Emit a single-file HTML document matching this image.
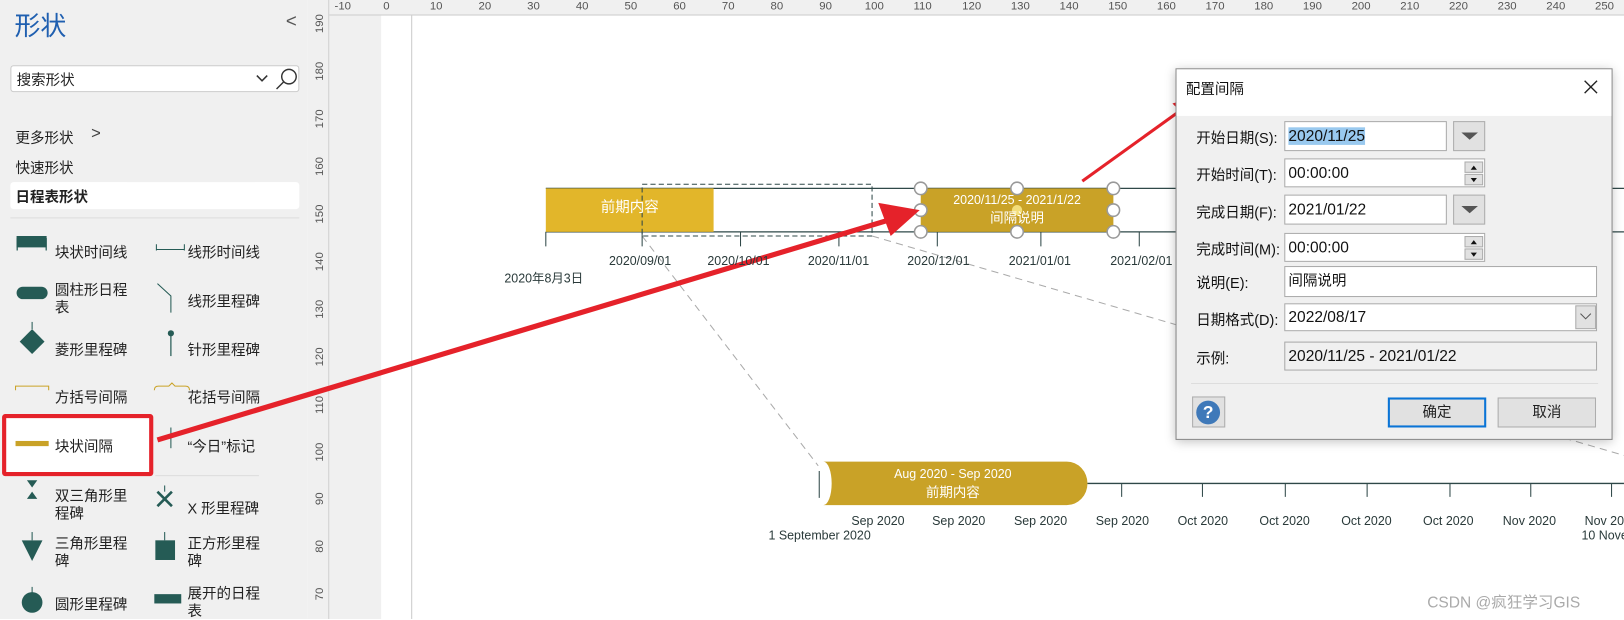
<!DOCTYPE html>
<html><head><meta charset="utf-8"><style>
*{margin:0;padding:0;box-sizing:border-box}
html,body{width:1624px;height:619px;overflow:hidden;background:#fff}
#w{position:absolute;left:0;top:0;width:1568px;height:598px;transform:scale(1.0357,1.0351);transform-origin:0 0;font-family:"Liberation Sans","Noto Sans CJK SC",sans-serif;color:#222}
.a{position:absolute;white-space:nowrap}
.side{left:0;top:0;width:297px;height:598px;background:#f0f0f0}
.st{font-size:14px;color:#222}
.rl{font-size:11px;color:#555}
.tl{font-size:12px;color:#2a3a3a}
.lbl{font-size:14px;color:#111}
.inp{background:#fff;border:1px solid #aaa;font-size:15px;padding:0 3px;color:#111;display:flex;align-items:center}
.btn{background:#e1e1e1;border:1px solid #adadad;font-size:14px;text-align:center}
</style></head><body><div id="w">
<!-- sidebar -->
<div class="a side"></div>
<div class="a" style="left:14px;top:6px;font-size:25px;color:#1f5fb0">形状</div>
<div class="a" style="left:276px;top:10px;font-size:18px;color:#555">&lt;</div>
<div class="a" style="left:10px;top:63px;width:279px;height:26px;background:#fff;border:1px solid #ccc;border-radius:3px"></div>
<div class="a st" style="left:16px;top:67px">搜索形状</div>
<svg class="a" style="left:246px;top:64px" width="44" height="24"><path d="M2 9l5 5 5-5" stroke="#333" fill="none" stroke-width="1.5"/><circle cx="33" cy="10" r="7" stroke="#333" fill="none" stroke-width="1.4"/><path d="M28 15l-7 7" stroke="#333" stroke-width="1.4"/></svg>
<div class="a st" style="left:15px;top:123px">更多形状</div>
<div class="a" style="left:88px;top:121px;font-size:16px;color:#444">&gt;</div>
<div class="a st" style="left:15px;top:152px">快速形状</div>
<div class="a" style="left:10px;top:176px;width:279px;height:26px;background:#fff;border-radius:3px"></div>
<div class="a st" style="left:15px;top:180px;font-weight:bold">日程表形状</div>
<div class="a" style="left:10px;top:210px;width:279px;height:1px;background:#ddd"></div>
<div class="a" style="left:2px;top:400px;width:146px;height:60px;border:4px solid #e5222a;border-radius:3px;background:#fff"></div>
<div class="a" style="left:150px;top:459px;width:100px;height:1px;background:#ddd"></div>
<svg class="a" style="left:0;top:225px" width="297" height="373">
<g fill="#255b55" stroke="#255b55">
<rect x="16" y="3" width="29" height="11" stroke="none"/><rect x="16" y="5" width="1.2" height="12" stroke="none"/><rect x="44" y="5" width="1.2" height="12" stroke="none"/>
<rect x="16" y="52" width="30" height="12" rx="6" stroke="none"/>
<path d="M31 93l12 12-12 12-12-12z" stroke="none"/><path d="M31 86v7" stroke-width="1"/>
<path d="M151 16h27M151 11v6M178 11v6" stroke-width="1" fill="none"/>
<path d="M152 49l13 12v16" fill="none" stroke-width="1"/>
<circle cx="165" cy="97" r="3" stroke="none"/><path d="M165 97v22" stroke-width="1.2"/>
<path d="M165 188v20" stroke-width="1"/>
<path d="M31 246l-5-7h10z M31 250l-5 7h10z" stroke="none"/>
<path d="M152 250l14 14M166 250l-14 14" stroke-width="2.5" fill="none"/><path d="M159 244v6" stroke-width="1"/>
<path d="M21 297h20l-10 20z" stroke="none"/><path d="M31 289v8" stroke-width="1"/>
<rect x="150" y="297" width="19" height="19" stroke="none"/><path d="M159 289v8" stroke-width="1"/>
<circle cx="31" cy="357" r="10" stroke="none"/><path d="M31 342v6" stroke-width="1"/>
<rect x="149" y="349" width="26" height="9" stroke="none"/>
</g>
<path d="M15 152v-4h32v4M149 152q0-4 4-4h10l3-3 3 3h10q4 0 4 4" stroke="#c9a227" fill="none" stroke-width="1"/>
<rect x="15" y="201" width="32" height="5" fill="#c9a227"/>
</svg>
<div class="a st" style="left:53px;top:234px">块状时间线</div>
<div class="a st" style="left:181px;top:234px">线形时间线</div>
<div class="a st" style="left:53px;top:272px;line-height:17px">圆柱形日程<br>表</div>
<div class="a st" style="left:181px;top:281px">线形里程碑</div>
<div class="a st" style="left:53px;top:328px">菱形里程碑</div>
<div class="a st" style="left:181px;top:328px">针形里程碑</div>
<div class="a st" style="left:53px;top:374px">方括号间隔</div>
<div class="a st" style="left:181px;top:374px">花括号间隔</div>
<div class="a st" style="left:53px;top:421px">块状间隔</div>
<div class="a st" style="left:181px;top:421px">“今日”标记</div>
<div class="a st" style="left:53px;top:471px;line-height:17px">双三角形里<br>程碑</div>
<div class="a st" style="left:181px;top:481px">X 形里程碑</div>
<div class="a st" style="left:53px;top:517px;line-height:17px">三角形里程<br>碑</div>
<div class="a st" style="left:181px;top:517px;line-height:17px">正方形里程<br>碑</div>
<div class="a st" style="left:53px;top:574px">圆形里程碑</div>
<div class="a st" style="left:181px;top:565px;line-height:17px">展开的日程<br>表</div>
<!-- rulers -->
<div class="a" style="left:297px;top:0;width:21px;height:598px;background:#f0f0f0;border-right:1px solid #ccc"></div>
<div class="a" style="left:318px;top:0;width:1250px;height:15px;background:#f0f0f0;border-bottom:1px solid #ccc"></div>
<div class="a" style="left:318px;top:15px;width:50px;height:583px;background:#f0f0f0"></div>
<div class="a" style="left:397px;top:15px;width:1px;height:583px;background:#ccc"></div>
<div class="a rl" style="left:323px;top:0">-10</div><div class="a rl" style="left:370px;top:0">0</div><div class="a rl" style="left:415px;top:0">10</div><div class="a rl" style="left:462px;top:0">20</div><div class="a rl" style="left:509px;top:0">30</div><div class="a rl" style="left:556px;top:0">40</div><div class="a rl" style="left:603px;top:0">50</div><div class="a rl" style="left:650px;top:0">60</div><div class="a rl" style="left:697px;top:0">70</div><div class="a rl" style="left:744px;top:0">80</div><div class="a rl" style="left:791px;top:0">90</div><div class="a rl" style="left:835px;top:0">100</div><div class="a rl" style="left:882px;top:0">110</div><div class="a rl" style="left:929px;top:0">120</div><div class="a rl" style="left:976px;top:0">130</div><div class="a rl" style="left:1023px;top:0">140</div><div class="a rl" style="left:1070px;top:0">150</div><div class="a rl" style="left:1117px;top:0">160</div><div class="a rl" style="left:1164px;top:0">170</div><div class="a rl" style="left:1211px;top:0">180</div><div class="a rl" style="left:1258px;top:0">190</div><div class="a rl" style="left:1305px;top:0">200</div><div class="a rl" style="left:1352px;top:0">210</div><div class="a rl" style="left:1399px;top:0">220</div><div class="a rl" style="left:1446px;top:0">230</div><div class="a rl" style="left:1493px;top:0">240</div><div class="a rl" style="left:1540px;top:0">250</div>
<svg class="a" style="left:297px;top:0" width="21" height="598"><g font-family="Liberation Sans" font-size="11" fill="#555">
<text transform="translate(15,32) rotate(-90)">190</text><text transform="translate(15,78) rotate(-90)">180</text><text transform="translate(15,124) rotate(-90)">170</text><text transform="translate(15,170) rotate(-90)">160</text><text transform="translate(15,216) rotate(-90)">150</text><text transform="translate(15,262) rotate(-90)">140</text><text transform="translate(15,308) rotate(-90)">130</text><text transform="translate(15,354) rotate(-90)">120</text><text transform="translate(15,400) rotate(-90)">110</text><text transform="translate(15,446) rotate(-90)">100</text><text transform="translate(15,488) rotate(-90)">90</text><text transform="translate(15,534) rotate(-90)">80</text><text transform="translate(15,580) rotate(-90)">70</text></g></svg>
<!-- canvas drawings -->
<svg class="a" style="left:0;top:0" width="1568" height="598">
<path d="M620 228L790 450M842 228L1568 440" stroke="#aaa" stroke-dasharray="7 5" fill="none"/>
<path d="M527 182H1568M527 224H1568" stroke="#2f4848" stroke-width="1.3"/>
<path d="M527 224v14M620 224v14M715 224v14M810 224v14M905 224v14M1005 224v14M1100 224v14" stroke="#2f4848"/>
<rect x="527" y="182" width="162" height="42" fill="#e2b62a"/>
<rect x="620" y="178" width="222" height="50" fill="none" stroke="#2f4848" stroke-dasharray="5 3"/>
<rect x="889" y="182" width="186" height="42" fill="#c9a227"/>
<g fill="#fff" stroke="#999" stroke-width="1.5"><circle cx="889" cy="182" r="6"/><circle cx="889" cy="203" r="6"/><circle cx="889" cy="224" r="6"/><circle cx="982" cy="182" r="6"/><circle cx="982" cy="224" r="6"/><circle cx="1075" cy="182" r="6"/><circle cx="1075" cy="203" r="6"/><circle cx="1075" cy="224" r="6"/></g>
<circle cx="982" cy="203" r="5" fill="#f3de7a"/>
<path d="M1050 467H1568" stroke="#2f4848" stroke-width="1.3"/>
<path d="M1083 467v13M1161 467v13M1241 467v13M1320 467v13M1400 467v13M1478 467v13M1556 467v13M791 455v26" stroke="#2f4848"/>
<path d="M795 446H1030a20 21 0 0 1 0 42H795a8 21 0 0 0 0-42z" fill="#c9a227"/>
<path d="M152 425L860 212" stroke="#e5222a" stroke-width="5"/><path d="M888 203L848 196 860 228z" fill="#e5222a"/>
<path d="M1045 175L1145 103" stroke="#e5222a" stroke-width="3"/><path d="M1162 91L1132 100 1146 114z" fill="#e5222a"/>
</svg>
<div class="a" style="left:527px;top:190px;width:162px;text-align:center;font-size:14px;color:#fff">前期内容</div>
<div class="a" style="left:889px;top:185px;width:186px;text-align:center;font-size:12px;color:#fff;line-height:17px">2020/11/25 - 2021/1/22<br><span style="font-size:13px">间隔说明</span></div>
<div class="a" style="left:795px;top:450px;width:250px;text-align:center;font-size:12px;color:#fff;line-height:17px">Aug 2020 - Sep 2020<br><span style="font-size:13px">前期内容</span></div>
<div class="a tl" style="left:588px;top:245px">2020/09/01</div><div class="a tl" style="left:683px;top:245px">2020/10/01</div><div class="a tl" style="left:780px;top:245px">2020/11/01</div><div class="a tl" style="left:876px;top:245px">2020/12/01</div><div class="a tl" style="left:974px;top:245px">2021/01/01</div><div class="a tl" style="left:1072px;top:245px">2021/02/01</div>
<div class="a tl" style="left:487px;top:260px">2020年8月3日</div>
<div class="a tl" style="left:822px;top:496px">Sep 2020</div><div class="a tl" style="left:900px;top:496px">Sep 2020</div><div class="a tl" style="left:979px;top:496px">Sep 2020</div><div class="a tl" style="left:1058px;top:496px">Sep 2020</div><div class="a tl" style="left:1137px;top:496px">Oct 2020</div><div class="a tl" style="left:1216px;top:496px">Oct 2020</div><div class="a tl" style="left:1295px;top:496px">Oct 2020</div><div class="a tl" style="left:1374px;top:496px">Oct 2020</div><div class="a tl" style="left:1451px;top:496px">Nov 2020</div><div class="a tl" style="left:1530px;top:496px">Nov 20</div>
<div class="a tl" style="left:742px;top:510px">1 September 2020</div><div class="a tl" style="left:1527px;top:510px">10 Nove</div>
<div class="a" style="left:1378px;top:571px;font-size:15px;color:#aaa">CSDN @疯狂学习GIS</div>
<!-- dialog -->
<div class="a" style="left:1135px;top:66px;width:422px;height:359px;background:#f0f0f0;border:1px solid #888;box-shadow:0 2px 10px rgba(0,0,0,.25)"></div>
<div class="a" style="left:1136px;top:67px;width:420px;height:45px;background:#fff"></div>
<div class="a" style="left:1145px;top:76px;font-size:14px;color:#111">配置间隔</div>
<svg class="a" style="left:1529px;top:77px" width="14" height="14"><path d="M1 1l12 12M13 1L1 13" stroke="#222" stroke-width="1.3"/></svg>
<div class="a lbl" style="left:1155px;top:123px">开始日期(S):</div>
<div class="a lbl" style="left:1155px;top:159px">开始时间(T):</div>
<div class="a lbl" style="left:1155px;top:195px">完成日期(F):</div>
<div class="a lbl" style="left:1155px;top:231px">完成时间(M):</div>
<div class="a lbl" style="left:1155px;top:263px">说明(E):</div>
<div class="a lbl" style="left:1155px;top:299px">日期格式(D):</div>
<div class="a lbl" style="left:1155px;top:336px">示例:</div>
<div class="a inp" style="left:1240px;top:117px;width:157px;height:29px"><span style="background:#99c9ef">2020/11/25</span></div>
<div class="a inp" style="left:1240px;top:153px;width:194px;height:28px">00:00:00</div>
<div class="a inp" style="left:1240px;top:188px;width:157px;height:29px">2021/01/22</div>
<div class="a inp" style="left:1240px;top:225px;width:194px;height:28px">00:00:00</div>
<div class="a inp" style="left:1240px;top:257px;width:302px;height:30px;font-size:14px;align-items:flex-start;padding-top:3px">间隔说明</div>
<div class="a inp" style="left:1240px;top:293px;width:302px;height:27px">2022/08/17</div>
<div class="a inp" style="left:1240px;top:330px;width:302px;height:28px;background:#f0f0f0">2020/11/25 - 2021/01/22</div>
<div class="a btn" style="left:1403px;top:117px;width:31px;height:29px"></div>
<div class="a btn" style="left:1403px;top:188px;width:31px;height:29px"></div>
<svg class="a" style="left:1408px;top:124px" width="22" height="90"><path d="M3 4h16l-8 7z M3 75h16l-8 7z" fill="#555"/></svg>
<div class="a btn" style="left:1414px;top:156px;width:18px;height:11px"></div><div class="a btn" style="left:1414px;top:168px;width:18px;height:11px"></div>
<div class="a btn" style="left:1414px;top:228px;width:18px;height:11px"></div><div class="a btn" style="left:1414px;top:240px;width:18px;height:11px"></div>
<svg class="a" style="left:1414px;top:156px" width="18" height="96"><path d="M6 8l3-4 3 4z M6 16l3 4 3-4z M6 80l3-4 3 4z M6 88l3 4 3-4z" fill="#111"/></svg>
<div class="a btn" style="left:1521px;top:295px;width:20px;height:23px"></div>
<svg class="a" style="left:1525px;top:302px" width="12" height="8"><path d="M1 1l5 5 5-5" stroke="#555" fill="none"/></svg>
<div class="a" style="left:1150px;top:370px;width:393px;height:1px;background:#ddd"></div>
<div class="a btn" style="left:1151px;top:383px;width:32px;height:30px"></div>
<div class="a" style="left:1155px;top:387px;width:23px;height:23px;border-radius:50%;background:#3f79b9;color:#fff;font-weight:bold;font-size:17px;text-align:center;line-height:23px">?</div>
<div class="a btn" style="left:1340px;top:384px;width:95px;height:29px;border:2px solid #0a74d6;line-height:25px">确定</div>
<div class="a btn" style="left:1446px;top:384px;width:95px;height:29px;line-height:27px">取消</div>
</div></body></html>
